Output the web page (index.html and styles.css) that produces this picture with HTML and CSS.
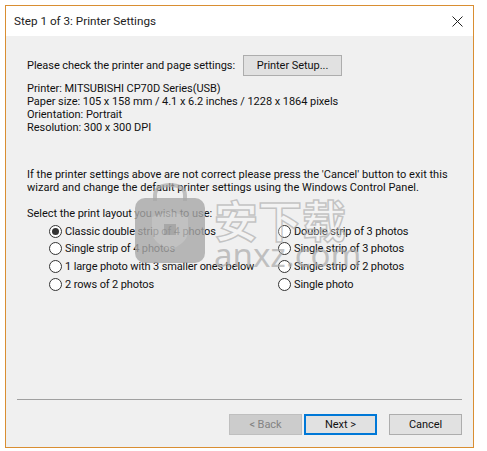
FILE: index.html
```html
<!DOCTYPE html>
<html>
<head>
<meta charset="utf-8">
<title>Step 1 of 3: Printer Settings</title>
<link rel="stylesheet" href="styles.css">
</head>
<body>
<div class="window">
	<div class="titlebar">
		<span class="title">Step 1 of 3: Printer Settings</span>
		<svg class="close" width="11" height="11" viewBox="0 0 11 11"><path d="M.5 .5L10.5 10.5M10.5 .5L.5 10.5" stroke="#222" stroke-width="1" fill="none"/></svg>
	</div>
	<div class="content">
		<div class="setup-row">
			<span>Please check the printer and page settings:</span>
			<button class="btn setup-btn">Printer Setup...</button>
		</div>
		<div class="info">
			<div>Printer: MITSUBISHI CP70D Series(USB)</div>
			<div>Paper size: 105 x 158 mm / 4.1 x 6.2 inches / 1228 x 1864 pixels</div>
			<div>Orientation: Portrait</div>
			<div>Resolution: 300 x 300 DPI</div>
		</div>
		<div class="note">
			<div>If the printer settings above are not correct please press the 'Cancel' button to exit this</div>
			<div>wizard and change the default printer settings using the Windows Control Panel.</div>
		</div>
		<div class="select-label">Select the print layout you wish to use:</div>
		<div class="layouts">
			<div class="radio"><i class="dot checked"></i>Classic double strip of 4 photos</div>
			<div class="radio"><i class="dot"></i>Double strip of 3 photos</div>
			<div class="radio"><i class="dot"></i>Single strip of 4 photos</div>
			<div class="radio"><i class="dot"></i>Single strip of 3 photos</div>
			<div class="radio"><i class="dot"></i>1 large photo with 3 smaller ones below</div>
			<div class="radio"><i class="dot"></i>Single strip of 2 photos</div>
			<div class="radio"><i class="dot"></i>2 rows of 2 photos</div>
			<div class="radio"><i class="dot"></i>Single photo</div>
		</div>
		<div class="footer">
			<div class="buttons">
				<button class="btn back" disabled>&lt; Back</button>
				<button class="btn next">Next &gt;</button>
				<button class="btn cancel">Cancel</button>
			</div>
		</div>
	</div>
	<div class="watermark">
		<svg class="lock" width="70" height="80" viewBox="0 0 70 80">
			<path d="M20 18V12C20 5 27 2 35 2S50 5 50 12V18" fill="none" stroke="#aaaaaa" stroke-opacity=".7" stroke-width="4"/>
			<rect x="0" y="15" width="70" height="65" rx="10" fill="#a8a8a8" fill-opacity=".8"/>
			<path d="M35 28L53 34V48C53 58 44 63 35 67C26 63 17 58 17 48V34Z" fill="#ffffff" fill-opacity=".16"/>
			<rect x="29" y="41" width="12" height="11" fill="#888888" fill-opacity=".45"/>
		</svg>
		<div class="wm-text">
			<div class="wm-cn">安下载</div>
			<div class="wm-en">anxz.com</div>
		</div>
	</div>
</div>
</body>
</html>
```
FILE: styles.css
```css
html, body {
	margin:0;
	padding:0;
	background:#ffffff;}
body {
	padding:5px 13px 3px 5px;
	font-family:Roboto, "Noto Sans", sans-serif;
	font-size:11px;
	letter-spacing:-.045px;
	color:#111111;}
.window {
	position:relative;
	width:467px;
	height:441px;
	border:1px solid #d98e32;
	display:flex;
	flex-direction:column;
	overflow:hidden;}
.titlebar {
	height:30px;
	flex:none;
	background:#ffffff;
	display:flex;
	justify-content:space-between;
	align-items:center;
	padding:0 10px 0 8px;
	color:#222222;}
.title {
	font-size:11.7px;
	letter-spacing:0;}
.content {
	flex:1;
	background:#f0f0f0;
	padding:19px 11px 11px 11px;
	display:flex;
	flex-direction:column;}
.setup-row {
	display:flex;
	align-items:center;
	gap:8px;
	padding-left:10px;
	height:21px;}
.btn {
	font:inherit;
	letter-spacing:inherit;
	color:#111111;
	background:#e1e1e1;
	border:1px solid #adadad;
	height:21px;
	padding:0;}
.setup-btn {width:99px;}
.info {
	margin-top:6px;
	padding-left:10px;
	line-height:13px;}
.note {
	margin-top:34px;
	padding-left:10px;
	line-height:13px;
	letter-spacing:.02px;}
.select-label {
	margin-top:13px;
	padding-left:10px;
	line-height:13px;}
.layouts {
	margin-top:3px;
	padding-left:32px;
	display:grid;
	grid-template-columns:229px 1fr;
	grid-template-rows:16px 18px 18px 18px;
	letter-spacing:-.12px;}
.radio {
	display:flex;
	align-items:center;
	gap:3px;
	white-space:nowrap;}
.dot {
	width:13px;
	height:13px;
	border:1px solid #333333;
	border-radius:50%;
	background:#ffffff;
	flex:none;
	box-sizing:border-box;
	position:relative;}
.dot.checked::after {
	content:"";
	position:absolute;
	left:2px;
	top:2px;
	width:7px;
	height:7px;
	border-radius:50%;
	background:#333333;}
.footer {
	margin-top:auto;
	border-top:1px solid #a0a0a0;
	height:36px;}
.buttons {
	display:flex;
	justify-content:flex-end;
	padding-top:14px;}
.buttons .btn {width:73px;}
.back {
	background:#cccccc;
	border-color:#bfbfbf;
	color:#838383;
	margin-right:2px;}
.buttons .next {
	border:2px solid #0078d7;
	margin-right:12px;}
.watermark {
	position:absolute;
	left:129px;
	top:177px;
	display:flex;
	gap:9px;
	letter-spacing:0;
	pointer-events:none;}
.wm-cn {
	font-family:"Noto Sans CJK SC", sans-serif;
	font-size:44px;
	font-weight:700;
	line-height:48px;
	margin-top:12px;
	color:rgba(255,255,255,.25);
	-webkit-text-stroke:1.5px rgba(175,175,175,.7);}
.wm-en {
	font-family:"Noto Sans", sans-serif;
	font-size:33px;
	line-height:24px;
	color:rgba(170,170,170,.7);}
```
